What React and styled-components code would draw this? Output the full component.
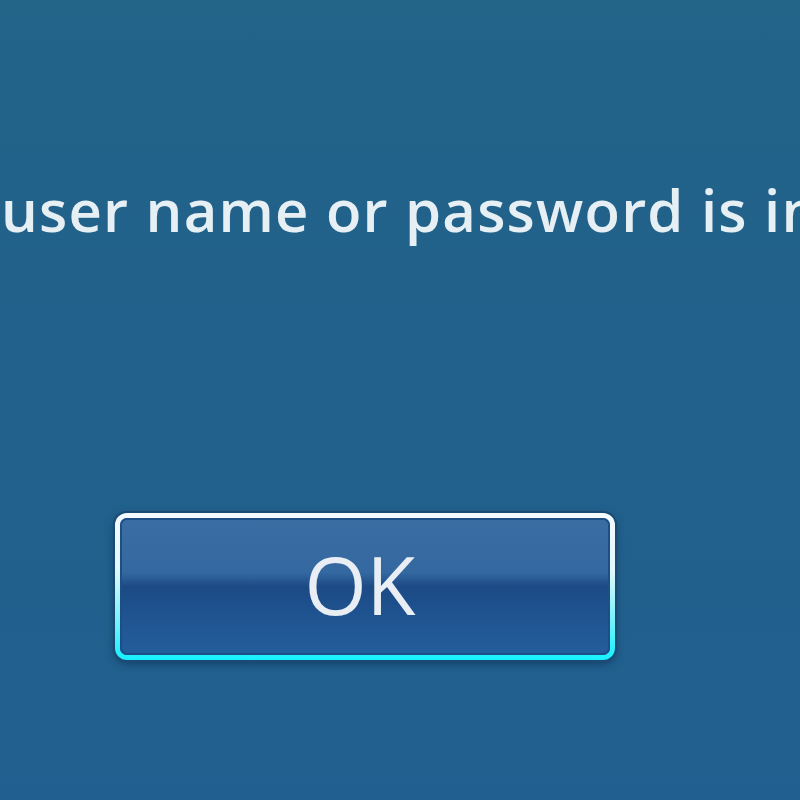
import React from "react";
import styled, { createGlobalStyle } from "styled-components";

const Global = createGlobalStyle`
  html, body {
    margin: 0;
    padding: 0;
    background: #226389;
  }
`;

const Screen = styled.div`
  width: 800px;
  height: 800px;
  overflow: hidden;
  display: flex;
  flex-direction: column;
  background: linear-gradient(180deg, #236489 0%, #21618b 45%, #215f90 100%);
  font-family: "Open Sans", "Noto Sans", sans-serif;
`;

const Message = styled.div`
  margin-top: 155px;
  padding-left: 1px;
  white-space: nowrap;
  overflow: hidden;
  color: #e6f0f4;
  font-size: 58px;
  font-weight: 600;
  line-height: 110px;
  letter-spacing: 1.2px;
`;

const ButtonRow = styled.div`
  margin-top: 248px;
  padding-left: 115px;
  display: flex;
`;

const OkButton = styled.button`
  width: 500px;
  height: 147px;
  border-radius: 12px;
  border: 5px solid transparent;
  box-shadow: 0 0 0 2px #1b4a72, 0 3px 8px rgba(0, 20, 50, 0.5),
    inset 0 0 0 2px #1d4f86;
  background:
    linear-gradient(
        180deg,
        #3a6ea3 0%,
        #3468a0 40%,
        #1c4a85 50%,
        #1f5592 75%,
        #245e9c 100%
      )
      padding-box,
    linear-gradient(180deg, #f4fbff 0%, #dff8fc 40%, #6ff2fb 75%, #14f0ff 100%)
      border-box;
  color: #e8eef4;
  font-family: "Open Sans", "Noto Sans", sans-serif;
  font-size: 80px;
  line-height: 1;
  padding: 0 10px 6px 0;
  cursor: pointer;
`;

export default function App() {
  return (
    <>
      <Global />
      <Screen>
        <Message>user name or password is incorrect.</Message>
        <ButtonRow>
          <OkButton>OK</OkButton>
        </ButtonRow>
      </Screen>
    </>
  );
}
